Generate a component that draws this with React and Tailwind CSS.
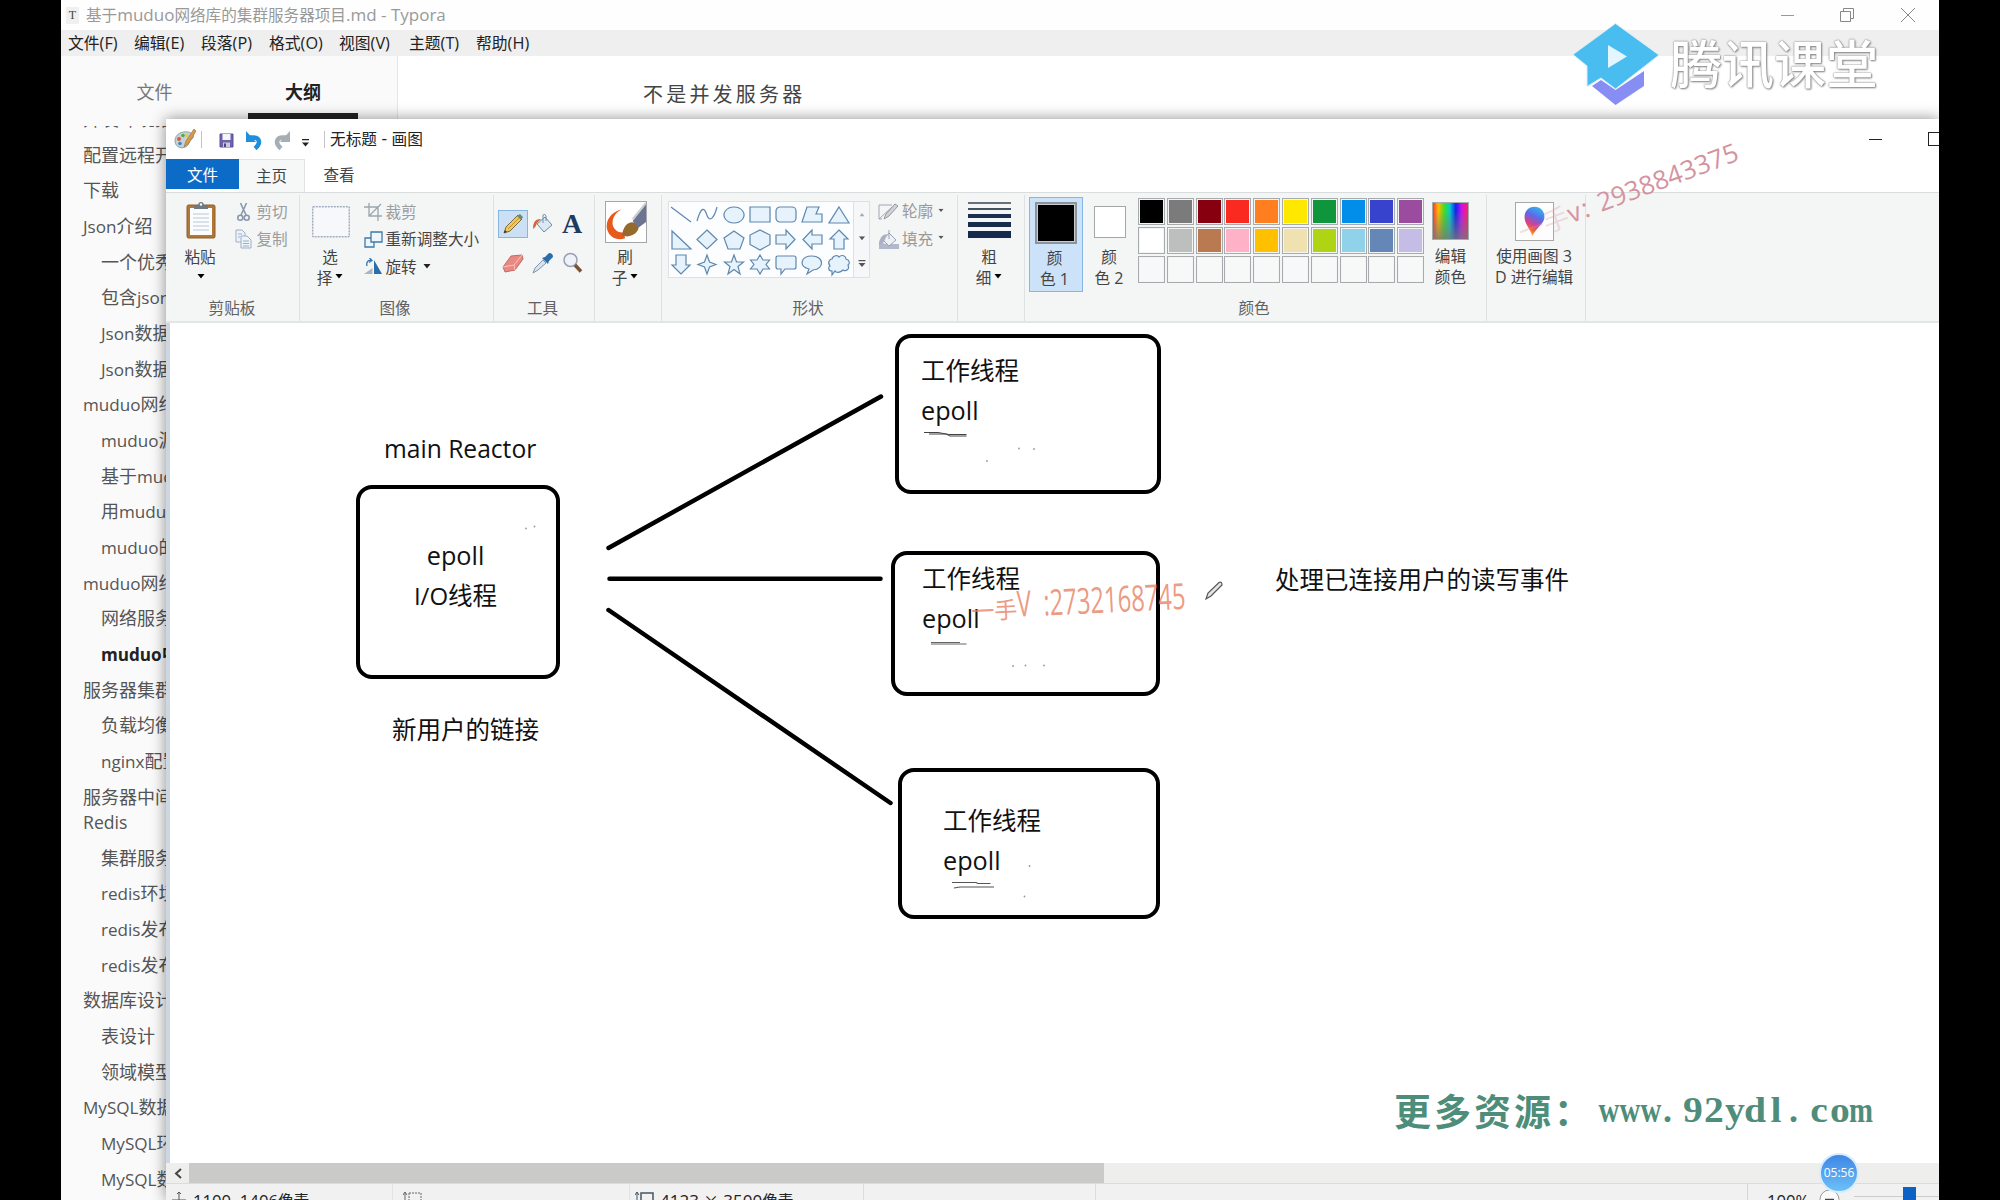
import React from "react";

const outline = [
  [0, "开发环境搭建"],
  [0, "配置远程开发环境"],
  [0, "下载"],
  [0, "Json介绍"],
  [1, "一个优秀的库"],
  [1, "包含json头文件"],
  [1, "Json数据序列化"],
  [1, "Json数据反序列化"],
  [0, "muduo网络库"],
  [1, "muduo源码编译"],
  [1, "基于muduo编程"],
  [1, "用muduo开发"],
  [1, "muduo的线程"],
  [0, "muduo网络库编程"],
  [1, "网络服务器"],
  [1, "muduo中的模型", true],
  [0, "服务器集群"],
  [1, "负载均衡器"],
  [1, "nginx配置"],
  [0, "服务器中间件", false, "Redis"],
  [1, "集群服务器"],
  [1, "redis环境"],
  [1, "redis发布"],
  [1, "redis发布"],
  [0, "数据库设计"],
  [1, "表设计"],
  [1, "领域模型"],
  [0, "MySQL数据库"],
  [1, "MySQL环境"],
  [1, "MySQL数据"],
];

const menus = [
  ["文件(F)", "w-[66px]"],
  ["编辑(E)", "w-[67px]"],
  ["段落(P)", "w-[68px]"],
  ["格式(O)", "w-[70px]"],
  ["视图(V)", "w-[70px]"],
  ["主题(T)", "w-[67px]"],
  ["帮助(H)", "w-[67px]"],
];

const palette = [
  "bg-black", "bg-[#7b7b7b]", "bg-[#86000f]", "bg-[#fb2a20]", "bg-[#ff7f20]",
  "bg-[#ffe800]", "bg-[#0f953c]", "bg-[#008eea]", "bg-[#3743cd]", "bg-[#9c4c9e]",
  "bg-white", "bg-[#bbbfbe]", "bg-[#b97a52]", "bg-[#ffb2c7]", "bg-[#ffc000]",
  "bg-[#efe1b0]", "bg-[#aed414]", "bg-[#90d2ea]", "bg-[#6587b7]", "bg-[#c5bde6]",
  "", "", "", "", "", "", "", "", "", "",
];

const shapes = [
  "M3 4 L23 19", "M3 18 C7 4 10 4 12.5 11 C15 20 20 16 23 4",
  "M13 4 a10 8 0 1 0 .01 0Z", "M3 4H23V19H3Z", "M7 4H19a4 4 0 0 1 4 4v7a4 4 0 0 1-4 4H7a4 4 0 0 1-4-4V8a4 4 0 0 1 4-4Z",
  "M8 4H20L17 11H23V19H3Z", "M13 4L23 20H3Z",
  "M4 3V21H23Z", "M13 2L23 11.5L13 21L3 11.5Z", "M13 3L23 10L19 21H7L3 10Z",
  "M13 2L23 7V16.500L13 22L3 16.500V7Z", "M3 7H13V2L22 11.500L13 21V16H3Z", "M23 7H13V2L4 11.500L13 21V16H23Z",
  "M13 2L22 11H18V21H8V11H4Z",
  "M8 2H18V12H22L13 21L4 12H8Z", "M13 2L15.500 9L22 11.500L15.500 14L13 21L10.500 14L4 11.500L10.500 9Z",
  "M13 2L15.500 9H22.500L17 13.500L19 21L13 16.500L7 21L9 13.500L3.500 9H10.500Z",
  "M13 2L16 7H22.500L19 11.500L22.500 16H16L13 21L10 16H3.500L7 11.500L3.500 7H10Z",
  "M5 3H21q2 0 2 2v9q0 2-2 2H12L8 21V16H5q-2 0-2-2V5q0-2 2-2Z",
  "M10 16C-1 13 2 3 13 3C25 3 26 16 14 17L8 21Z",
  "M6 18C2 18 2 14 4 13C1 9 4 6 6 6C7 2 12 2 13 4C16 1 20 3 20 6C24 7 24 11 22 12C24 16 20 19 17 17C14 20 10 20 9 18L6 22Z",
];

function T({ children, className = "", latin = "text-[1.03em]" }) {
  const parts = children.split(/([\x20-\x7e]+)/).filter(Boolean);
  return (
    <span className={"whitespace-pre " + className}>
      {parts.map((p, i) =>
        /^[\x20-\x7e]/.test(p) ? (
          <span key={i} className={"font-['Open_Sans','Noto_Sans',sans-serif] leading-none " + latin}>{p}</span>
        ) : (
          <React.Fragment key={i}>{p}</React.Fragment>
        )
      )}
    </span>
  );
}

function Caret({ className = "" }) {
  return (
    <svg className={"h-[5px] w-[8px] shrink-0 " + className} viewBox="0 0 8 5">
      <path d="M0.500 0H7.500L4 4.500Z" fill="currentColor" />
    </svg>
  );
}

function Group({ width, label, children }) {
  return (
    <div className={"flex h-[126px] shrink-0 flex-col border-r border-[#dfe2e3] " + width}>
      <div className="flex h-[102px] items-start">{children}</div>
      <div className="pr-[3px] text-center text-[15.6px] leading-[20px] text-[#606060]"><T>{label}</T></div>
    </div>
  );
}

function TwoLine({ a, b, caret, className = "" }) {
  return (
    <div className={"flex flex-col items-center text-[15.6px] leading-[20.500px] text-[#444] " + className}>
      <T>{a}</T>
      <span className="flex items-center gap-[3px]">
        <T>{b}</T>
        {caret && <Caret className="text-black" />}
      </span>
    </div>
  );
}

function Row({ icon, text, dim, caret }) {
  return (
    <div className={"flex h-[27.500px] items-center text-[15.600px] leading-[20px] " + (dim ? "text-[#9a9c9e]" : "text-[#444]")}>
      <span className="flex w-[21.500px] shrink-0 justify-start">{icon}</span>
      <T className="-mt-[2px]">{text}</T>
      {caret && <Caret className="ml-[6px] text-[#222]" />}
    </div>
  );
}

function QuickAccess() {
  return (
    <div className="flex h-[40px] items-center">
      <svg className="ml-[8px] h-[22px] w-[23px]" viewBox="0 0 23 22">
        <path d="M1 13C1 6 8 3 14 4C19 5 21 9 18 11C15 12 16 14 14 17C10 22 1 20 1 13Z" fill="#c3d4d8" stroke="#8ba3ab" />
        <circle cx="5" cy="11" r="2" fill="#e2553a" /><circle cx="9" cy="7.500" r="1.800" fill="#57a84a" />
        <circle cx="6" cy="15.500" r="1.800" fill="#3c84c9" /><circle cx="13" cy="7.500" r="1.500" fill="#eec33c" />
        <path d="M20 1L22 3L15 15L10 19L12 13Z" fill="#d79a4a" stroke="#a8713a" strokeWidth=".7" />
      </svg>
      <div className="ml-[4px] h-[17px] w-px bg-[#c4c4c4]" />
      <svg className="ml-[17px] mt-[2px] h-[15px] w-[15px]" viewBox="0 0 15 15">
        <path d="M1 1H14V14H1Z" fill="#6d63a9" stroke="#5a5198" />
        <path d="M3.500 1H11.500V7H3.500Z" fill="#f4f4fb" /><path d="M4 9.500H11V14H4Z" fill="#c9c8e0" /><path d="M5 10.500H7V14H5Z" fill="#4b4586" />
      </svg>
      <svg className="ml-[11px] mt-[2px] h-[20px] w-[18px]" viewBox="0 0 18 20">
        <path d="M3 7.500H8C14.500 7.500 16.500 13 10 18.500" fill="none" stroke="#1f8fdb" strokeWidth="4.500" />
        <path d="M1 1V12H11Z" fill="#1f8fdb" />
      </svg>
      <svg className="ml-[10px] mt-[2px] h-[20px] w-[18px]" viewBox="0 0 18 20">
        <path d="M15 7.500H10C3.500 7.500 1.500 13 8 18.500" fill="none" stroke="#a5adb5" strokeWidth="4.500" />
        <path d="M17 1V12H7Z" fill="#a5adb5" />
      </svg>
      <svg className="ml-[10px] mt-[7px] h-[8px] w-[9px]" viewBox="0 0 9 8"><path d="M1 0H8V1.300H1ZM1 3.500H8L4.500 7.500Z" fill="#222" /></svg>
      <div className="ml-[14px] h-[17px] w-px bg-[#c4c4c4]" />
      <T className="ml-[5px] text-[15.700px] text-[#222]" latin="text-[1.1em]">无标题 - 画图</T>
      <div className="ml-auto mr-[46px] h-px w-[13px] bg-[#222]" />
      <div className="-mr-[4px] h-[14px] w-[15px] shrink-0 border border-[#222]" />
    </div>
  );
}

function Ribbon() {
  return (
    <div className="flex h-[131px] shrink-0 border-b-2 border-t border-b-[#e3e6e7] border-t-[#dadddd] bg-[#f4f5f5] pl-[2px] pt-[2px]">
      <Group width="w-[132px]" label="剪贴板">
        <div className="ml-[16px] mt-[6px] flex w-[34px] flex-col items-center text-[15.600px] leading-[20px] text-[#444]">
          <svg className="h-[38px] w-[32px]" viewBox="0 0 32 38">
            <rect x="2" y="4" width="28" height="33" rx="1.500" fill="#b07735" stroke="#8f5f2b" />
            <rect x="5" y="7" width="22" height="27" fill="#fbfcfe" />
            <path d="M8 13H24M8 17H24M8 21H24M8 25H24M8 29H24" stroke="#b9c6d4" />
            <path d="M9 8V5H13Q13 1 16 1Q19 1 19 5H23V8Z" fill="#6e7a85" /><circle cx="16" cy="3.500" r="1.200" fill="#fff" />
          </svg>
          <T className="mt-[7px] -ml-[2px]">粘贴</T>
          <Caret className="mt-[8px] text-black" />
        </div>
        <div className="ml-[17px] mt-[3px]">
          <Row dim text="剪切" icon={
            <svg className="ml-[2px] h-[20px] w-[13px]" viewBox="0 0 13 20" fill="none" stroke="#8798ad" strokeWidth="1.600">
              <path d="M3.500 1L9 13M9.500 1L4 13" /><circle cx="3.300" cy="15.700" r="2.500" /><circle cx="9.700" cy="15.700" r="2.500" />
            </svg>} />
          <Row dim text="复制" icon={
            <svg className="h-[20px] w-[17px]" viewBox="0 0 17 20" fill="#eef3f9" stroke="#9db0c8">
              <path d="M1 1H7L10 4V13H1Z" /><path d="M6 7H12L16 11V19H6Z" /><path d="M8 12H14M8 14.500H14M8 17H14M3 5H7M3 8H5" />
            </svg>} />
        </div>
      </Group>

      <Group width="w-[194px]" label="图像">
        <div className="ml-[12px] mt-[11px] flex flex-col items-center">
          <svg className="h-[32px] w-[38px]" viewBox="0 0 38 32"><rect x=".8" y=".8" width="36.400" height="30" fill="#f6f8fc" stroke="#7d8ba5" strokeDasharray="2 1" /></svg>
          <TwoLine className="mt-[8px] -ml-[2px]" a="选" b="择" caret />
        </div>
        <div className="ml-[14px] mt-[3px]">
          <Row dim text="裁剪" icon={
            <svg className="h-[18px] w-[18px]" viewBox="0 0 18 18" fill="none" stroke="#9aa5b0" strokeWidth="1.300">
              <path d="M5 0V13H18M0 4H14V18M17 1L5 13" />
            </svg>} />
          <Row text="重新调整大小" icon={
            <svg className="h-[17px] w-[19px]" viewBox="0 0 19 17" stroke="#3f7aa8" strokeWidth="1.300">
              <path d="M1 7H10V16H1Z" fill="#eef6fc" /><path d="M7 1H18V11H7Z" fill="#eef6fc" />
            </svg>} />
          <Row text="旋转" caret icon={
            <svg className="h-[18px] w-[19px]" viewBox="0 0 19 18">
              <path d="M10 16V2L18 16Z" fill="#2c6ea8" /><path d="M8.500 16V10L0 16Z" fill="#a9b6bd" />
              <path d="M3 8C2 4 4 2 7 2.500M5.500 0L8 2.500L5 4.500" fill="none" stroke="#2e78b7" strokeWidth="1.300" />
            </svg>} />
        </div>
      </Group>

      <Group width="w-[101px]" label="工具">
        <div className="ml-[4px] mt-[15px] grid grid-cols-[30px_30px_30px] grid-rows-[28px_50px] items-center justify-items-center">
          <div className="flex h-[28px] w-[30px] items-center justify-center border border-[#8ab4e0] bg-[#cbe0f5]">
            <svg className="h-[22px] w-[22px]" viewBox="0 0 22 22">
              <path d="M2 20L4 14L16 2L20 6L8 18Z" fill="#f0c862" stroke="#7c6a3c" /><path d="M15 3L19 7L21 4L18 1Z" fill="#6f8a66" /><path d="M2 20L3 17L5 19Z" fill="#333" /><path d="M6 16L17 5" stroke="#c79032" />
            </svg>
          </div>
          <svg className="h-[22px] w-[22px]" viewBox="0 0 22 22">
            <path d="M13 4L20 12L12 19L5 11Z" fill="#dbe9f4" stroke="#6d8aa5" /><path d="M11 10V2Q13 0 14 3V8" fill="none" stroke="#7790a8" />
            <path d="M9 6Q1 5 1 16Q4 14 5 10Z" fill="#d8643a" />
          </svg>
          <span className="-ml-[2px] font-['Liberation_Serif',serif] text-[28px] font-bold leading-[28px] text-[#1f3a5f]">A</span>
          <svg className="h-[20px] w-[22px]" viewBox="0 0 22 20">
            <path d="M1 14L9 3L20 2L21 6L13 17L3 19Z" fill="#e98983" stroke="#c56862" /><path d="M1 14L12 12L20 2M12 12L13 17" fill="none" stroke="#f8c3bd" />
          </svg>
          <svg className="h-[22px] w-[22px]" viewBox="0 0 22 22">
            <path d="M1 21L3 16L11 8L14 11L6 18Z" fill="#d7e4ef" stroke="#8296aa" /><path d="M10 6L16 12L17 9L21 5Q21 1 17 1L13 5Z" fill="#2b6cab" />
          </svg>
          <svg className="h-[22px] w-[22px]" viewBox="0 0 22 22">
            <circle cx="8.500" cy="8" r="6.500" fill="#eef2f8" stroke="#9aa0b4" strokeWidth="1.500" /><path d="M13 13L19 19.500" stroke="#7c5236" strokeWidth="3.500" />
          </svg>
        </div>
      </Group>

      <Group width="w-[67px]" label="">
        <div className="ml-[10px] mt-[6px] flex w-[42px] flex-col items-center">
          <svg className="h-[42px] w-[42px] border border-[#a3a7ab] bg-white" viewBox="0 0 42 42">
            <path d="M16.500 8C13 9 6 15 7 24C8 29 13 33 19 32L20 38C12 41 3 37 1 28C-1 17 9 9 16.500 8Z" fill="#e8591c" />
            <path d="M17 35C18 25 24 19 31 22C37 25 34 32 27 35C23 37 20 36 17 35Z" fill="#96692d" />
            <path d="M28 20L42 2V21L34 27Z" fill="#6b7590" /><path d="M28 18L42 1" stroke="#c6ccd3" strokeWidth="2" />
          </svg>
          <TwoLine className="mt-[3px] -ml-[2px]" a="刷" b="子" caret />
        </div>
      </Group>

      <Group width="w-[296px]" label="形状">
        <div className="ml-[6px] mt-[6px] flex h-[77px] w-[202px] shrink-0 border border-[#dde1e6] bg-white">
          <div className="grid w-[184px] grid-cols-7 content-around bg-[#fbfdff]">
            {shapes.map((d, i) => (
              <svg key={i} className="-ml-px h-[24px] w-[26px]" viewBox="0 0 26 24">
                <path d={d} fill={i < 2 ? "none" : "#e6f3fc"} stroke="#5f87ad" strokeWidth="1.200" />
              </svg>
            ))}
          </div>
          <div className="flex flex-1 flex-col items-center justify-around border-l border-[#dde1e6] bg-[#f6f7f8] text-[#555]">
            <Caret className="rotate-180 scale-75 text-[#aaa]" />
            <Caret className="scale-90" />
            <svg className="h-[8px] w-[8px]" viewBox="0 0 8 8"><path d="M.5 0H7.500V1.200H.5ZM.5 3H7.500L4 7Z" fill="#555" /></svg>
          </div>
        </div>
        <div className="ml-[8px] mt-[3px]">
          <div className="flex h-[27.500px] items-center text-[15.600px] text-[#999]">
            <svg className="mr-[3px] h-[19px] w-[21px]" viewBox="0 0 21 19">
              <path d="M1 3H14M1 3V17H4M1 17L14 5" stroke="#a0a8b0" fill="none" /><path d="M6 17L8 12L17 2L20 4L11 14Z" fill="#cdd2d6" stroke="#929aa2" />
            </svg>
            <T className="-mt-[2px]">轮廓</T><Caret className="ml-[4px] -mt-[3px] scale-75 text-[#555]" />
          </div>
          <div className="flex h-[27.500px] items-center text-[15.600px] text-[#999]">
            <svg className="mr-[3px] h-[21px] w-[21px]" viewBox="0 0 21 21">
              <path d="M1 20V13L8 15H21V20Z" fill="#b1b9ca" /><path d="M11 4L18 11L11 17L5 11Z" fill="#edf0f5" stroke="#99a3b6" /><path d="M11 10V1" stroke="#99a3b6" /><path d="M9 5Q1 6 1 16L6 13Z" fill="#a8b1c4" />
            </svg>
            <T className="-mt-[2px]">填充</T><Caret className="ml-[4px] -mt-[3px] scale-75 text-[#555]" />
          </div>
        </div>
      </Group>

      <Group width="w-[67px]" label="">
        <div className="ml-[10px] mt-[7px] flex w-[42px] flex-col items-center">
          <div className="flex h-[36px] w-[43px] flex-col justify-between">
            <div className="h-[1.500px] bg-[#67717c]" /><div className="h-[2px] bg-[#445263]" /><div className="h-[4px] bg-[#1b3050]" />
            <div className="h-[5px] bg-[#182c4c]" /><div className="h-[7px] bg-[#152a4c]" />
          </div>
          <TwoLine className="mt-[8px]" a="粗" b="细" caret />
        </div>
      </Group>

      <Group width="w-[462px]" label="颜色">
        <div className="ml-[4px] mt-[2px] flex h-[95px] w-[54px] shrink-0 flex-col items-center border border-[#86b6e6] bg-[#cce2f8]">
          <div className="mt-[4px] h-[42px] w-[42px] border-2 border-[#8b949d] bg-black outline-1 -outline-offset-3 outline-[#c8cdd2]" />
          <TwoLine className="-ml-[3px] mt-[3px]" a="颜" b="色 1" />
        </div>
        <div className="ml-[11px] mt-[11px] flex w-[32px] shrink-0 flex-col items-center">
          <div className="h-[32px] w-[32px] border border-[#a5a5a5] bg-white" />
          <TwoLine className="-ml-[2px] mt-[8px] whitespace-nowrap" a="颜" b="色 2" />
        </div>
        <div className="ml-[12px] mt-[3px] grid grid-cols-[repeat(10,28.800px)] gap-y-[2px]">
          {palette.map((c, i) => (
            <div key={i} className="h-[27px] w-[27px] border border-[#a8abad] p-px">
              <div className={"h-full w-full " + (c || "bg-[#f7f8f8]")} />
            </div>
          ))}
        </div>
        <div className="ml-[6px] mt-[7px] flex flex-col items-center">
          <div className="h-[38px] w-[37px] border border-[#a8abad] bg-[linear-gradient(to_bottom,transparent_20%,#777c_100%),linear-gradient(to_right,#f33,#fb0_15%,#4d2_32%,#0cc_48%,#12e_65%,#c1e_82%,#f25)]" />
          <TwoLine className="mt-[5px]" a="编辑" b="颜色" />
        </div>
      </Group>

      <Group width="w-[99px]" label="">
        <div className="mt-[7px] flex w-full flex-col items-center">
          <svg className="-ml-[4px] h-[39px] w-[39px] border border-[#a8a8a8] bg-[#fdfdfd]" viewBox="0 0 39 39">
            <defs>
              <linearGradient id="pin" x1=".7" y1="0" x2=".35" y2="1">
                <stop offset="0" stopColor="#2fb6f0" /><stop offset=".35" stopColor="#5b6ae8" /><stop offset=".62" stopColor="#d3408f" /><stop offset=".8" stopColor="#f0643a" /><stop offset="1" stopColor="#fbc02d" />
              </linearGradient>
            </defs>
            <path d="M19.500 4C26 4 30 9 30 14.500C30 22 22 25 17 35C16 28 9 23 9 14.500C9 9 13 4 19.500 4Z" fill="url(#pin)" />
          </svg>
          <TwoLine className="-ml-[4px] mt-[4px] whitespace-nowrap" a="使用画图 3" b="D 进行编辑" />
        </div>
      </Group>
    </div>
  );
}

function Label({ className, children }) {
  return <div className={"absolute whitespace-nowrap text-[24.500px] leading-[40px] text-[#111] " + className}>{children}</div>;
}

/* Items on the drawing surface keep their free position. */
function Canvas() {
  return (
    <div className="relative h-[840px] w-full shrink-0 overflow-hidden border-l-4 border-l-[#cdd7e2] bg-white">
      <div className="absolute left-[186px] top-[162px] h-[194px] w-[204px] rounded-[16px] border-4 border-black" />
      <div className="absolute left-[725px] top-[11px] h-[160px] w-[266px] rounded-[16px] border-4 border-black" />
      <div className="absolute left-[721px] top-[228px] h-[145px] w-[269px] rounded-[16px] border-4 border-black" />
      <div className="absolute left-[728px] top-[445px] h-[151px] w-[262px] rounded-[16px] border-4 border-black" />
      <Label className="left-[214px] top-[105px]"><T latin="text-[1.005em]">main Reactor</T></Label>
      <Label className="left-[186px] top-[212px] w-[199px] text-center"><T>epoll</T><br /><T latin="text-[.98em]">I/O线程</T></Label>
      <Label className="left-[222px] top-[386px]"><T>新用户的链接</T></Label>
      <Label className="left-[751px] top-[27px]"><T>工作线程</T><br /><T>epoll</T></Label>
      <Label className="left-[752px] top-[235px]"><T>工作线程</T><br /><T>epoll</T></Label>
      <Label className="left-[773px] top-[477px]"><T>工作线程</T><br /><T>epoll</T></Label>
      <Label className="left-[1105px] top-[236px]"><T>处理已连接用户的读写事件</T></Label>
      <svg className="absolute left-0 top-0 h-[840px] w-[1200px]" viewBox="170 323 1200 840" fill="none">
        <g stroke="#000" strokeWidth="4.500" strokeLinecap="round">
          <path d="M608.500 548L881 396.500" /><path d="M609.500 578.700H880.500" /><path d="M608.500 610L890.500 803" />
        </g>
        <g stroke="#444" strokeWidth="1.300">
          <path d="M924 432.500H938L949 434.500H966.500M929 434H946L950 436H966.500" strokeWidth="1" />
          <path d="M931 642.500H960M931 644H966.500" stroke="#666" strokeWidth="1.100" />
          <path d="M952 882.500H976L978 883.500H990.500M954 888L960 887H994" stroke="#555" strokeWidth="1.100" />
        </g>
        <g fill="#999">
          <circle cx="526" cy="528.500" r=".9" /><circle cx="534.500" cy="526.500" r=".9" /><circle cx="987" cy="461" r=".9" />
          <circle cx="1019" cy="448.500" r=".9" /><circle cx="1034" cy="449" r=".9" /><circle cx="1013" cy="666" r=".9" />
          <circle cx="1025.500" cy="665.500" r=".9" /><circle cx="1044" cy="665.500" r=".9" /><circle cx="1029.500" cy="866" r=".9" /><circle cx="1024.500" cy="896.500" r=".9" />
        </g>
        <path d="M1206 599L1208 593L1219 582.500Q1222 581 1222 585L1211 596Z" fill="#e4e4e4" stroke="#555" strokeWidth="1.200" />
      </svg>
      <div className="absolute left-[801px] top-[261px] flex origin-left -rotate-[2.700deg] items-center whitespace-pre text-[#e8805f]/80">
        <span className="mt-[8px] text-[23px] leading-[36px]">一手</span>
        <span className="block w-[176px] origin-left scale-x-[.66] font-['Open_Sans',sans-serif] text-[36px] leading-[40px]">V  :2732168745</span>
      </div>
      <div className="absolute left-[1224px] top-[760px] flex text-[37px] font-bold leading-[54px] text-[#4f8d7b]">
        <span className="tracking-[3px]">更多资源</span>
        <span className="w-[44px]">：</span>
        {"www.92ydl.com".split("").map((c, i) => (
          <span key={i} className="flex w-[21px] justify-center font-['Liberation_Serif',serif] text-[36px]">
            <span className={c === "w" || c === "m" ? "scale-x-[.8]" : c === "." ? "-ml-[8px]" : "scale-x-110"}>{c}</span>
          </span>
        ))}
      </div>
    </div>
  );
}

function StatusBar() {
  return (
    <div className="flex h-[17px] shrink-0 overflow-hidden border-t border-[#dcdcdc] bg-[#f1f1f1] text-[15.600px] leading-[32px] text-[#222]">
      <div className="flex h-[34px] w-[226px] items-start">
        <svg className="ml-[6px] mt-[8px] h-[16px] w-[14px]" viewBox="0 0 14 16" stroke="#555" fill="none"><path d="M7 0V16M0 8H14M5 2L7 0L9 2" /></svg>
        <T className="ml-[7px]" latin="text-[1.07em]">1100, 1406像素</T>
      </div>
      <div className="w-[238px] border-x border-[#e4e4e4]">
        <svg className="ml-[10px] mt-[8px] h-[18px] w-[19px]" viewBox="0 0 19 18" stroke="#666" fill="none"><path d="M2 0V16M0 3L2 0L4 3" /><path d="M6 1H18V17H6Z" strokeDasharray="2 1" /></svg>
      </div>
      <div className="flex h-[34px] w-[233px] items-start">
        <svg className="ml-[5px] mt-[8px] h-[18px] w-[19px]" viewBox="0 0 19 18" stroke="#456" fill="none"><path d="M2 0V16M0 3L2 0L4 3" /><path d="M6 1H18V17H6Z" strokeWidth="1.500" /></svg>
        <T className="ml-[6px]" latin="text-[1.09em]">4123 × 3500像素</T>
      </div>
      <div className="w-[233px] border-x border-[#dcdcdc]" />
      <div className="ml-auto flex h-[34px] w-[192px] items-start border-l border-[#d5d5d5]">
        <T className="ml-[19px]" latin="text-[1.07em]">100%</T>
        <svg className="ml-[10px] mt-[5px] h-[21px] w-[21px]" viewBox="0 0 21 21" fill="#fafafa" stroke="#999"><circle cx="10.500" cy="10.500" r="9.500" /><path d="M6 10.500H15" stroke="#444" strokeWidth="1.500" /></svg>
        <div className="ml-[14px] mt-[12px] h-px w-[49px] bg-[#ccc]" />
        <div className="mt-[3px] h-[20px] w-[13px] bg-[#0b62c4]" />
        <div className="mt-[12px] h-px flex-1 bg-[#ccc]" />
      </div>
    </div>
  );
}

function PaintWindow() {
  return (
    <div className="absolute left-[105px] top-[119px] flex h-[1081px] w-[1773px] flex-col bg-white shadow-[0_0_14px_rgba(0,0,0,.45)]">
      <QuickAccess />
      <div className="flex h-[33px] shrink-0 text-[15.600px] leading-[30px] text-[#444]">
        <div className="h-[30px] w-[73px] bg-[#0b6bc6] text-center text-white">文件</div>
        <div className="-mb-px h-[34px] w-[66px] border-r border-t border-[#e1e3e4] bg-[#f6f7f7] text-center">主页</div>
        <div className="w-[68px] text-center">查看</div>
      </div>
      <Ribbon />
      <Canvas />
      <div className="flex h-[20px] shrink-0 items-stretch bg-[#eeeeed]">
        <div className="flex w-[23px] items-center justify-center">
          <svg className="h-[11px] w-[8px]" viewBox="0 0 8 11" fill="none" stroke="#444" strokeWidth="2"><path d="M7 1L2 5.500L7 10" /></svg>
        </div>
        <div className="w-[915px] bg-[#cacac9]" />
      </div>
      <StatusBar />
    </div>
  );
}

function Typora() {
  return (
    <div className="flex h-[1200px] flex-col bg-white">
      <div className="flex h-[30px] shrink-0 items-center bg-[#fefefe]">
        <div className="ml-[5px] flex h-[17px] w-[13px] items-center justify-center bg-[#f0f0f0] font-['Liberation_Serif',serif] text-[12px] text-[#444]">T</div>
        <T className="-mt-px ml-[7px] text-[15.600px] text-[#999]" latin="text-[1.09em]">基于muduo网络库的集群服务器项目.md - Typora</T>
        <div className="ml-auto flex items-center">
          <div className="h-px w-[13px] bg-[#999]" />
          <svg className="ml-[46px] h-[14px] w-[14px]" viewBox="0 0 14 14" fill="none" stroke="#888"><path d="M.5 3.500H10.500V13.500H.5ZM3.500 3.500V.5H13.500V10.500H10.500" /></svg>
          <svg className="ml-[47px] mr-[24px] h-[14px] w-[14px]" viewBox="0 0 14 14" fill="none" stroke="#888"><path d="M0 0L14 14M14 0L0 14" /></svg>
        </div>
      </div>
      <div className="flex h-[26px] shrink-0 items-center bg-[#efefef] pl-[7px] text-[15.800px] leading-[26px] text-[#222]">
        {menus.map(([m, w]) => <span key={m} className={w}><T>{m}</T></span>)}
      </div>
      <div className="flex flex-1 overflow-hidden">
        <div className="flex w-[337px] flex-col border-r border-[#e6e6e6] bg-[#fafafa]">
          <div className="flex h-[63px] shrink-0 text-[18px] leading-[70px]">
            <div className="ml-[31px] w-[125px] text-center text-[#777]">文件</div>
            <div className="ml-[31px] h-[63px] w-[110px] border-b-[6px] border-[#222] text-center font-bold text-[#222]">大纲</div>
          </div>
          <div className="mt-[7px] flex-1 overflow-hidden">
            <div className="-mt-[25px] pl-[22px]">
              {outline.map(([level, text, strong, second], i) => (
                <div key={i} className={"whitespace-nowrap py-[5.080px] text-[18px] leading-[25.500px] " + (level ? "pl-[18px] " : "") + (strong ? "font-bold text-[#222]" : "text-[#555]")}>
                  <T latin="text-[.95em]">{text}</T>
                  {second && <div><T latin="text-[.98em]">{second}</T></div>}
                </div>
              ))}
            </div>
          </div>
        </div>
        <div className="flex-1 pl-[245px] pt-[23px] text-[20px] leading-[30px] tracking-[3.200px] text-[#444]">不是并发服务器</div>
      </div>
    </div>
  );
}

export default function App() {
  return (
    <div className="flex h-[1200px] w-[2000px] justify-center overflow-hidden bg-black font-['Noto_Sans_CJK_SC',sans-serif]">
      <div className="relative h-[1200px] w-[1878px] overflow-hidden">
        <Typora />
        <PaintWindow />
        <div className="absolute left-[1511px] top-[22px] flex items-center">
          <svg className="h-[84px] w-[88px]" viewBox="0 0 88 84">
            <path d="M20 64L29 58L43.500 68L72 49V64L43.500 83Z" fill="#868df3" />
            <path d="M1 32.500L43.500 1.500L87 33L43.500 67L29 56L15 64.500V44Z" fill="#49bdf0" stroke="#d7eef8" strokeWidth="1" />
            <path d="M36 23V46L55 34.500Z" fill="#e4f6fd" />
          </svg>
          <span className="-mt-[4px] ml-[10px] text-[52px] font-medium leading-[84px] text-white [text-shadow:0_0_2px_#888,1px_1px_2px_#888,0_0_1px_#999]">腾讯课堂</span>
        </div>
        <div className="absolute left-[1458px] top-[217px] flex origin-left -rotate-[20.500deg] items-center whitespace-pre text-[26px] leading-[30px] text-[#d4949f]">
          <span className="text-[#d4949f]/30">一手</span>
          <span className="w-[32px] font-['Open_Sans',sans-serif] tracking-[2px]">v:</span>
          <span className="font-['Open_Sans',sans-serif]">2938843375</span>
        </div>
        <div className="absolute left-[1758px] top-[1153px] flex h-[40px] w-[40px] items-center justify-center rounded-full border-2 border-[#d9ecfb] bg-linear-to-b from-[#3f86e6] to-[#6cc0f7] font-['Open_Sans',sans-serif] text-[12px] text-white">05:56</div>
      </div>
    </div>
  );
}
